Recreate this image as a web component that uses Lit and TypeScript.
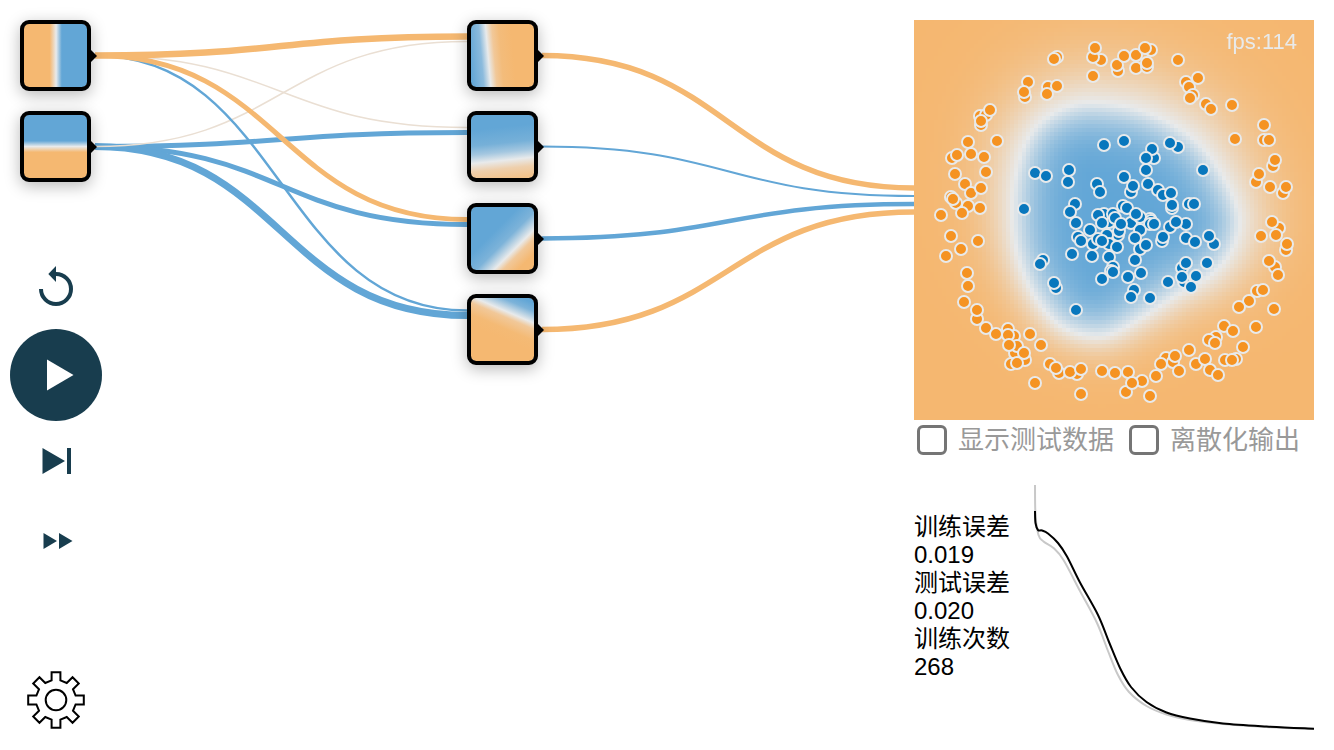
import { LitElement, html, svg, css } from "lit";
import { customElement, property, query, state } from "lit/decorators.js";

type Point = [number, number];

interface Link {
  from: number;
  to: number;
  width: number;
  color: string;
}

const ORANGE = "#f5b871";
const BLUE = "#62a6d6";
const FAINT = "#eadfd3";

const NODE = 71;
const MARGIN = 20;
const rowTop = (row: number) => Math.round(MARGIN + (row * 274) / 3);
const rowCenter = (row: number) => rowTop(row) + NODE / 2;

const FIRST_LAYER: Link[] = [
  { from: 1, to: 1, width: 5, color: BLUE },
  { from: 1, to: 2, width: 5, color: BLUE },
  { from: 1, to: 3, width: 7, color: BLUE },
  { from: 1, to: 0, width: 1.5, color: FAINT },
  { from: 0, to: 1, width: 1.5, color: FAINT },
  { from: 0, to: 3, width: 2.5, color: BLUE },
  { from: 0, to: 2, width: 5, color: ORANGE },
  { from: 0, to: 0, width: 6.5, color: ORANGE },
];

const OUTPUT_LAYER: Link[] = [
  { from: 0, to: 0, width: 5.5, color: ORANGE },
  { from: 1, to: 1, width: 2, color: BLUE },
  { from: 2, to: 2, width: 4.5, color: BLUE },
  { from: 3, to: 3, width: 5.5, color: ORANGE },
];

/* Zero level of the network output, clockwise in plot units (0..400). */
const CONTOUR: Point[] = [
  [184, 83], [232, 92], [279, 118], [309, 156], [325, 196], [319, 228],
  [298, 254], [263, 275], [229, 297], [200, 313], [176, 316], [150, 308],
  [131, 291], [113, 262], [102, 228], [99, 195], [101, 160], [110, 126],
  [127, 102], [153, 87],
];

const OUTER: Point[] = [
  [143, 37], [140, 39], [187, 40], [179, 37], [181, 28], [179, 56], [204, 51],
  [203, 45], [210, 36], [114, 62], [111, 77], [110, 72], [134, 67], [143, 66],
  [133, 74], [66, 96], [67, 105], [72, 95], [67, 101], [76, 90], [83, 121],
  [54, 122], [38, 138], [43, 135], [57, 134], [70, 137], [41, 154], [72, 152],
  [51, 164], [57, 173], [67, 168], [37, 177], [42, 183], [39, 179], [54, 186],
  [48, 193], [66, 188], [27, 195], [222, 35], [237, 30], [231, 28], [222, 48],
  [233, 47], [233, 43], [264, 40], [272, 62], [284, 58], [275, 67], [279, 75],
  [276, 78], [292, 84], [297, 89], [318, 85], [350, 105], [350, 120],
  [355, 120], [321, 119], [359, 146], [361, 140], [342, 162], [345, 154],
  [356, 167], [369, 173], [372, 167], [365, 208], [358, 202], [347, 216],
  [362, 215], [372, 230], [373, 224], [361, 247], [355, 241], [364, 255],
  [343, 271], [349, 270], [335, 281], [325, 287], [360, 289], [342, 307],
  [310, 306], [319, 311], [302, 317], [295, 320], [301, 323], [329, 327],
  [322, 339], [311, 340], [318, 340], [275, 330], [252, 338], [259, 342],
  [261, 336], [247, 344], [265, 351], [282, 344], [291, 339], [296, 350],
  [304, 355], [242, 356], [214, 352], [228, 361], [212, 372], [218, 363],
  [236, 376], [37, 216], [64, 221], [47, 229], [32, 236], [53, 253],
  [54, 266], [50, 282], [63, 299], [63, 290], [72, 308], [82, 314], [94, 309],
  [100, 316], [94, 315], [116, 314], [127, 325], [101, 333], [103, 326],
  [95, 325], [111, 340], [110, 333], [97, 344], [103, 343], [136, 344],
  [145, 353], [142, 348], [163, 354], [156, 352], [167, 349], [188, 351],
  [201, 353], [121, 363], [167, 374],
];

const INNER: Point[] = [
  [195, 202], [217, 203], [204, 215], [236, 199], [190, 125], [121, 153],
  [132, 156], [155, 150], [154, 162], [183, 164], [186, 172], [161, 184],
  [156, 192], [110, 189], [190, 194], [184, 195], [199, 194], [162, 203],
  [210, 121], [264, 127], [256, 123], [240, 138], [238, 129], [232, 138],
  [232, 150], [289, 150], [210, 157], [217, 172], [219, 166], [234, 164],
  [244, 170], [249, 175], [257, 173], [258, 188], [258, 185], [275, 184],
  [280, 184], [209, 186], [213, 188], [226, 197], [222, 194], [237, 201],
  [236, 204], [240, 204], [256, 207], [272, 204], [262, 202], [205, 211],
  [226, 210], [221, 218], [226, 229], [232, 225], [221, 240], [248, 221],
  [249, 217], [272, 218], [281, 222], [300, 224], [295, 216], [293, 243],
  [268, 248], [272, 243], [270, 262], [268, 257], [282, 256], [277, 267],
  [254, 262], [214, 257], [227, 253], [220, 270], [217, 277], [236, 278],
  [176, 210], [164, 217], [167, 221], [158, 234], [178, 236], [179, 224],
  [193, 215], [184, 219], [195, 224], [188, 221], [203, 227], [195, 237],
  [199, 247], [197, 251], [199, 252], [188, 259], [188, 203], [201, 198],
  [207, 204], [129, 240], [126, 244], [142, 268], [140, 263], [162, 290],
];

const TRAIN_LOSS: Point[] = [
  [1, 26], [1.5, 38], [4, 45], [8, 45.5], [14, 48.5], [24, 58], [33, 71.5],
  [46, 97.5], [64, 130], [75, 157], [86, 183], [97, 202], [112.5, 217],
  [132.5, 227.5], [156, 233.5], [189, 238.5], [232.5, 241.5], [280, 243.7],
];

const TEST_LOSS: Point[] = [
  [1, 0], [1.5, 30], [4.5, 50], [9.5, 56.5], [19.5, 63], [29.5, 75],
  [46, 106], [63, 138], [74, 166], [84, 190], [95, 207], [112.5, 221],
  [132.5, 229.5], [156, 235], [189, 239], [232.5, 242], [280, 244],
];

function smoothPath(p: Point[]): string {
  let d = `M${p[0][0]} ${p[0][1]}`;
  for (let i = 0; i < p.length - 1; i++) {
    const a = p[Math.max(i - 1, 0)];
    const b = p[i];
    const c = p[i + 1];
    const e = p[Math.min(i + 2, p.length - 1)];
    d += `C${b[0] + (c[0] - a[0]) / 6} ${b[1] + (c[1] - a[1]) / 6} ${c[0] - (e[0] - b[0]) / 6} ${c[1] - (e[1] - b[1]) / 6} ${c[0]} ${c[1]}`;
  }
  return d;
}

/* Densifies the closed contour with a Catmull-Rom spline. */
function closedCurve(p: Point[], steps: number): Point[] {
  const out: Point[] = [];
  const n = p.length;
  for (let i = 0; i < n; i++) {
    const [a, b, c, e] = [p[(i + n - 1) % n], p[i], p[(i + 1) % n], p[(i + 2) % n]];
    for (let s = 0; s < steps; s++) {
      const t = s / steps;
      const at = (k: 0 | 1) =>
        0.5 *
        (2 * b[k] + (c[k] - a[k]) * t +
          (2 * a[k] - 5 * b[k] + 4 * c[k] - e[k]) * t * t +
          (3 * b[k] - a[k] - 3 * c[k] + e[k]) * t * t * t);
      out.push([at(0), at(1)]);
    }
  }
  return out;
}

function signedDistance(x: number, y: number, ring: Point[]): number {
  let best = Infinity;
  let inside = false;
  for (let i = 0, j = ring.length - 1; i < ring.length; j = i++) {
    const [x1, y1] = ring[j];
    const [x2, y2] = ring[i];
    const dx = x2 - x1;
    const dy = y2 - y1;
    const t = Math.max(0, Math.min(1, ((x - x1) * dx + (y - y1) * dy) / (dx * dx + dy * dy)));
    best = Math.min(best, Math.hypot(x - x1 - t * dx, y - y1 - t * dy));
    if (y1 > y !== y2 > y && x < ((x2 - x1) * (y - y1)) / (y2 - y1) + x1) inside = !inside;
  }
  return inside ? -best : best;
}

@customElement("heat-map")
class HeatMap extends LitElement {
  static styles = css`
    :host {
      display: block;
      position: relative;
      aspect-ratio: 1;
    }
    .field,
    .points {
      display: block;
      width: 100%;
      height: 100%;
    }
    .field {
      image-rendering: pixelated;
    }
    .points {
      position: absolute;
      inset: 0;
    }
    .fps {
      position: absolute;
      top: 8px;
      right: 17px;
      font-size: 22px;
      line-height: 28px;
      color: #e8eaeb;
    }
    .dot {
      stroke: #e8eaeb;
      stroke-width: 2;
    }
    .outer {
      fill: #f59322;
    }
    .inner {
      fill: #0877bd;
    }
  `;

  @property({ type: Number }) fps = 0;
  @query("canvas") private canvas!: HTMLCanvasElement;

  firstUpdated() {
    const size = 100;
    const ctx = this.canvas.getContext("2d")!;
    const image = ctx.createImageData(size, size);
    const ring = closedCurve(CONTOUR, 5);
    const mid = [232, 234, 235];
    const warm = [245, 183, 112];
    const cool = [96, 165, 214];
    for (let j = 0; j < size; j++) {
      for (let i = 0; i < size; i++) {
        const x = i * 4 + 2;
        const y = j * 4 + 2;
        const d = signedDistance(x, y, ring);
        const angle = Math.atan2(y - 200, x - 200);
        const reach = 40 + 14 * Math.cos(angle + 1.3);
        const v = d > 0 ? Math.tanh(d / reach) : Math.tanh(d / 34);
        const end = v > 0 ? warm : cool;
        const k = Math.abs(v);
        const o = (j * size + i) * 4;
        for (let c = 0; c < 3; c++) image.data[o + c] = mid[c] + (end[c] - mid[c]) * k;
        image.data[o + 3] = 255;
      }
    }
    ctx.putImageData(image, 0, 0);
  }

  render() {
    return html`
      <canvas class="field" width="100" height="100"></canvas>
      <svg class="points" viewBox="0 0 400 400">
        ${OUTER.map(([x, y]) => svg`<circle class="dot outer" cx=${x} cy=${y} r="6" />`)}
        ${INNER.map(([x, y]) => svg`<circle class="dot inner" cx=${x} cy=${y} r="6" />`)}
      </svg>
      <span class="fps">fps:${this.fps}</span>
    `;
  }
}

@customElement("neuron-network")
class NeuronNetwork extends LitElement {
  static styles = css`
    :host {
      display: block;
      position: relative;
      min-height: 384px;
    }
    .links {
      position: absolute;
      inset: 0;
      width: 100%;
      height: 100%;
    }
    .link {
      fill: none;
    }
    .node {
      position: absolute;
      box-sizing: border-box;
      width: 71px;
      height: 71px;
      padding: 0;
      border: 4px solid #000;
      border-radius: 9px;
      background-origin: padding-box;
      background-clip: padding-box;
      background-color: #000;
      box-shadow: 0 4px 16px rgba(0, 0, 0, 0.28);
    }
    .node::after {
      content: "";
      position: absolute;
      left: 100%;
      top: 50%;
      margin: -7px 0 0 3px;
      border-left: 7px solid #000;
      border-top: 7px solid transparent;
      border-bottom: 7px solid transparent;
    }
    .x1 {
      background-image: linear-gradient(90deg, #f5b871 41%, #e8eaeb 51%, #62a6d6 60%);
    }
    .x2 {
      background-image: linear-gradient(180deg, #62a6d6 41%, #e8eaeb 50%, #f5b871 59%);
    }
    .h1 {
      background-image: linear-gradient(85deg, #62a6d6 2%, #8cbbdd 19%, #e8eaeb 29%, #f1c899 38%, #f3bc7b 48%, #f5b871 66%);
    }
    .h2 {
      background-image: linear-gradient(174deg, #62a6d6 22%, #76b0d8 45%, #a4c7e0 58%, #e8eaeb 70%, #eecfac 82%, #f2c28a 97%);
    }
    .h3 {
      background-image: linear-gradient(135deg, #62a6d6 38%, #7db3d9 54%, #e8eaeb 68%, #f1c899 75%, #f5b871 87%);
    }
    .h4 {
      background-image: linear-gradient(203deg, #62a6d6 6%, #7db3d9 15%, #e8eaeb 28%, #f1c899 35%, #f4ba75 48%, #f5b871 60%);
    }
  `;

  @state() private width = 914;
  private observer = new ResizeObserver(([entry]) => {
    this.width = entry.contentRect.width;
  });

  connectedCallback() {
    super.connectedCallback();
    this.observer.observe(this);
  }

  disconnectedCallback() {
    this.observer.disconnect();
    super.disconnectedCallback();
  }

  private link(x1: number, y1: number, x2: number, y2: number, link: Link) {
    const m = (x1 + x2) / 2;
    return svg`<path class="link" stroke=${link.color} stroke-width=${link.width}
      d="M${x1} ${y1}C${m} ${y1} ${m} ${y2} ${x2} ${y2}" />`;
  }

  private node(name: string, left: number, row: number) {
    return html`<button class="node ${name}" aria-label=${name}
      style="left:${left}px;top:${rowTop(row)}px"></button>`;
  }

  render() {
    const hidden = (MARGIN + this.width) / 2;
    return html`
      <svg class="links">
        ${FIRST_LAYER.map((l) =>
          this.link(MARGIN + NODE + 4, rowCenter(l.from), hidden, rowCenter(l.to) - 19 + l.from * 5, l))}
        ${OUTPUT_LAYER.map((l) =>
          this.link(hidden + NODE + 4, rowCenter(l.from), this.width, 188 + l.to * 8, l))}
      </svg>
      ${["x1", "x2"].map((name, row) => this.node(name, MARGIN, row))}
      ${["h1", "h2", "h3", "h4"].map((name, row) => this.node(name, hidden, row))}
    `;
  }
}

function gearPath(): string {
  const tooth: Point[] = [[-4.4, -19.6], [-4.4, -27.8], [4.4, -27.8], [4.4, -19.6]];
  const points: string[] = [];
  for (let i = 0; i < 8; i++) {
    const c = Math.cos((i * Math.PI) / 4);
    const s = Math.sin((i * Math.PI) / 4);
    for (const [x, y] of tooth) points.push(`${(x * c - y * s).toFixed(2)} ${(x * s + y * c).toFixed(2)}`);
  }
  return `M${points.join("L")}Z`;
}

@customElement("app-root")
class AppRoot extends LitElement {
  static styles = css`
    :host {
      display: grid;
      grid-template-columns: 112px minmax(0, 1fr) 400px;
      min-height: 100vh;
      padding-right: 20px;
      box-sizing: border-box;
      background: #fff;
      color: #000;
      font-family: "Liberation Sans", "Noto Sans CJK SC", sans-serif;
    }
    .network {
      grid-area: 1 / 1 / 2 / 3;
    }
    .controls {
      grid-area: 1 / 1 / 2 / 2;
      display: grid;
      grid-template-rows: 1fr auto 1fr;
      justify-items: center;
      pointer-events: none;
    }
    .upper,
    .lower {
      display: flex;
      flex-direction: column;
      align-items: center;
    }
    .upper {
      justify-content: flex-end;
      padding-bottom: 9px;
    }
    .lower {
      padding-bottom: 18px;
    }
    .icon,
    .play {
      display: grid;
      place-items: center;
      padding: 0;
      border: 0;
      background: none;
      color: #183d4e;
      cursor: pointer;
      pointer-events: auto;
    }
    .icon {
      width: 64px;
      height: 64px;
    }
    .play {
      width: 92px;
      height: 92px;
      border-radius: 50%;
      background: #183d4e;
      color: #fff;
    }
    .step {
      height: 80px;
    }
    .settings {
      margin-top: auto;
      color: #000;
    }
    .output {
      grid-area: 1 / 3 / 2 / 4;
      display: flex;
      flex-direction: column;
      padding: 20px 0 0;
      box-sizing: border-box;
    }
    .options {
      display: flex;
      gap: 15px;
      height: 40px;
      padding-left: 3px;
      margin-bottom: 25px;
      white-space: nowrap;
    }
    .option {
      display: flex;
      align-items: center;
      gap: 11px;
      font-size: 26px;
      line-height: 32px;
      color: #999;
    }
    .check {
      appearance: none;
      box-sizing: border-box;
      width: 30px;
      height: 30px;
      margin: 0;
      border: 3px solid #757575;
      border-radius: 6px;
      background: #fff;
    }
    .check:checked {
      background: #757575;
    }
    .report {
      display: grid;
      grid-template-columns: 120px minmax(0, 1fr);
    }
    .stats {
      margin: 0;
      padding-top: 28px;
      font-size: 24px;
      line-height: 28px;
    }
    .value {
      margin: 0;
    }
    .chart {
      display: block;
      width: 100%;
    }
    .loss {
      fill: none;
      stroke-width: 2;
    }
    .train {
      stroke: #000;
    }
    .test {
      stroke: #c8c8c8;
    }
  `;

  private stats = [
    ["训练误差", "0.019"],
    ["测试误差", "0.020"],
    ["训练次数", "268"],
  ];

  render() {
    return html`
      <neuron-network class="network"></neuron-network>
      <nav class="controls">
        <div class="upper">
          <button class="icon" aria-label="重置">
            <svg width="44" height="44" viewBox="-22 -22 44 44">
              <path d="M-15 1A15 15 0 1 0 0 -14" fill="none" stroke="currentColor" stroke-width="4" />
              <path d="M0 -22V-6L-7.7 -14Z" fill="currentColor" />
            </svg>
          </button>
        </div>
        <button class="play" aria-label="运行">
          <svg width="92" height="92" viewBox="-46 -46 92 92">
            <path d="M-9 -15.5V15.5L17.5 0Z" fill="currentColor" />
          </svg>
        </button>
        <div class="lower">
          <button class="icon step" aria-label="单步">
            <svg width="44" height="44" viewBox="-22 -22 44 44">
              <path d="M-13.5 -13V13L9 0ZM11 -13H15V13H11Z" fill="currentColor" />
            </svg>
          </button>
          <button class="icon step" aria-label="快进">
            <svg width="44" height="44" viewBox="-22 -22 44 44">
              <path d="M-12.5 -8V8L1 0ZM3 -8V8L16.5 0Z" fill="currentColor" />
            </svg>
          </button>
          <button class="icon settings" aria-label="设置">
            <svg width="60" height="60" viewBox="-30 -30 60 60" fill="none" stroke="currentColor" stroke-width="2">
              <path d=${gearPath()} />
              <circle r="10.3" />
            </svg>
          </button>
        </div>
      </nav>
      <main class="output">
        <heat-map fps="114"></heat-map>
        <div class="options">
          <label class="option"><input class="check" type="checkbox" />显示测试数据</label>
          <label class="option"><input class="check" type="checkbox" />离散化输出</label>
        </div>
        <section class="report">
          <dl class="stats">
            ${this.stats.map(([name, value]) => html`<dt>${name}</dt><dd class="value">${value}</dd>`)}
          </dl>
          <svg class="chart" viewBox="0 0 280 246">
            <path class="loss test" d=${smoothPath(TEST_LOSS)} />
            <path class="loss train" d=${smoothPath(TRAIN_LOSS)} />
          </svg>
        </section>
      </main>
    `;
  }
}
